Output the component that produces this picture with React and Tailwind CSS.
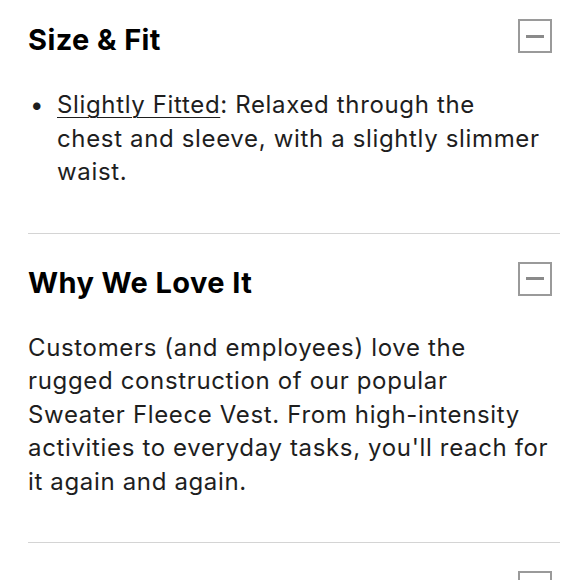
const MinusBox = () => (
  <button className="w-[34px] h-[34px] shrink-0 border-2 border-[#9a9a9a] flex items-center justify-center bg-white mr-[8px]">
    <span className="block w-[18px] h-[3px] bg-[#8a8a8a]" />
  </button>
);

const Section = ({ title, children, first, last }) => (
  <div className={first ? "pt-[19px] pb-[44px]" : "border-t border-[#d4d4d4] pt-[28px] pb-[44px]"}>
    <div className="flex flex-row justify-between items-start">
      <h2 className={(last ? "mt-[9px]" : "mt-[4px]") + " text-[29px] leading-[34px] font-bold tracking-[0.4px] text-black"}>{title}</h2>
      <MinusBox />
    </div>
    {children}
  </div>
);

const App = () => {
  return (
    <div
      className="bg-white h-[580px] overflow-hidden pl-[28px] pr-[20px] text-[#1e1e1e]"
      style={{ fontFamily: "Inter, 'Noto Sans', sans-serif" }}
    >
      <Section title="Size &amp; Fit" first>
        <ul className="mt-[31px] text-[24px] leading-[33.5px] tracking-[0.65px]">
          <li className="flex flex-row">
            <span className="w-[29px] shrink-0 pl-[2px]">•</span>
            <span>
              <span className="underline underline-offset-[4px] decoration-1">Slightly Fitted</span>: Relaxed through the
              <br />
              chest and sleeve, with a slightly slimmer
              <br />
              waist.
            </span>
          </li>
        </ul>
      </Section>
      <Section title="Why We Love It">
        <p className="mt-[31px] text-[24px] leading-[33.5px] tracking-[0.65px]">
          Customers (and employees) love the
          <br />
          rugged construction of our popular
          <br />
          Sweater Fleece Vest. From high-intensity
          <br />
          activities to everyday tasks, you'll reach for
          <br />
          it again and again.
        </p>
      </Section>
      <Section title="Product Details" last>
        <p className="mt-[31px] text-[24px] leading-[33.5px] tracking-[0.65px]">Details</p>
      </Section>
    </div>
  );
};

export default App;
